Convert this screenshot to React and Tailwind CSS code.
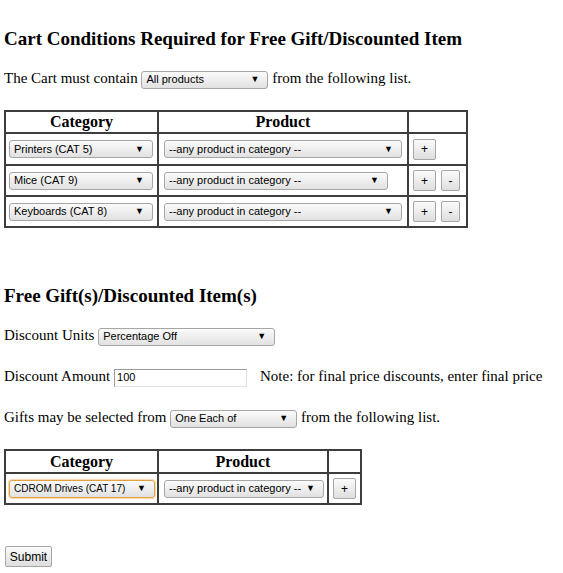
const sel =
  "inline-flex items-center justify-between h-[18px] rounded-[3px] border border-[#a6a6a6] bg-linear-to-b from-[#fbfbfb] to-[#e1e1e1] pl-[4px] pr-[8px] align-middle whitespace-nowrap font-['Liberation_Sans',Arial,sans-serif] text-[11px] leading-none text-black"

const btn =
  "flex h-[21px] items-center justify-center rounded-[2px] border border-[#a6a6a6] bg-linear-to-b from-[#fbfbfb] to-[#dedede] font-['Liberation_Sans',Arial,sans-serif] text-[12px] leading-none text-black"

const Select = ({ label, className = '', labelClass = '' }) => (
  <span className={`${sel} ${className}`}>
    <span className={labelClass}>{label}</span>
    <span className="text-[9px]">▼</span>
  </span>
)

const conditions = [
  { category: 'Printers (CAT 5)', productWidth: 'w-[238px]', minus: false, height: 'h-[30px]' },
  { category: 'Mice (CAT 9)', productWidth: 'w-[224px]', minus: true, height: 'h-[29px]' },
  { category: 'Keyboards (CAT 8)', productWidth: 'w-[238px]', minus: true, height: 'h-[29px]' },
]

export default function App() {
  return (
    <div className="min-h-[573px] bg-white pl-[4px] font-['Liberation_Serif','Times_New_Roman',serif] text-[15px] text-black">
      <h3 className="pt-[28px] text-[19px] font-bold leading-[22px]">
        Cart Conditions Required for Free Gift/Discounted Item
      </h3>
      <div className="mt-[19px] h-[19px] leading-[19px]">
        The Cart must contain <Select label="All products" className="w-[127px]" /> from the following list.
      </div>

      <div className="mt-[22px] grid w-fit grid-cols-[151px_248px_57px] gap-[2px] bg-[#3d3d3d] p-[2px]">
        <div className="flex h-[20px] items-center justify-center bg-white text-[16px] font-bold">Category</div>
        <div className="flex h-[20px] items-center justify-center bg-white text-[16px] font-bold">Product</div>
        <div className="h-[20px] bg-white" />
        {conditions.map((row) => (
          <div key={row.category} className="contents">
            <div className={`flex ${row.height} items-center bg-white pl-[3px]`}>
              <Select label={row.category} className="w-[144px]" />
            </div>
            <div className={`flex ${row.height} items-center bg-white pl-[5px]`}>
              <Select label="--any product in category --" className={row.productWidth} />
            </div>
            <div className={`flex ${row.height} items-center gap-[5px] bg-white pl-[4px]`}>
              <button className={`${btn} w-[23px]`}>+</button>
              {row.minus && <button className={`${btn} w-[19px]`}>-</button>}
            </div>
          </div>
        ))}
      </div>

      <h3 className="mt-[57px] text-[19px] font-bold leading-[22px]">Free Gift(s)/Discounted Item(s)</h3>
      <div className="mt-[19px] h-[19px] leading-[19px]">
        Discount Units <Select label="Percentage Off" className="w-[177px]" />
      </div>
      <div className="mt-[22px] h-[19px] leading-[19px]">
        Discount Amount{' '}
        <input
          defaultValue="100"
          className="h-[18px] w-[133px] border border-t-[#9a9a9a] border-l-[#9a9a9a] border-r-[#e2e2e2] border-b-[#e2e2e2] px-[2px] align-middle font-['Liberation_Sans',Arial,sans-serif] text-[11px] outline-none"
        />
        <span className="ml-[13px]">Note: for final price discounts, enter final price</span>
      </div>
      <div className="mt-[22px] h-[19px] leading-[19px]">
        Gifts may be selected from <Select label="One Each of" className="w-[127px]" /> from the following list.
      </div>

      <div className="mt-[22px] grid w-fit grid-cols-[151px_168px_31px] gap-[2px] bg-[#3d3d3d] p-[2px]">
        <div className="flex h-[21px] items-center justify-center bg-white text-[16px] font-bold">Category</div>
        <div className="flex h-[21px] items-center justify-center bg-white text-[16px] font-bold">Product</div>
        <div className="h-[21px] bg-white" />
        <div className="flex h-[29px] items-center bg-white pl-[3px]">
          <Select
            label="CDROM Drives (CAT 17)"
            labelClass="text-[10px]"
            className="w-[146px] border-[#e3a23f] shadow-[0_0_1px_1px_rgba(240,190,110,0.6)]"
          />
        </div>
        <div className="flex h-[29px] items-center bg-white pl-[5px]">
          <Select label="--any product in category --" className="w-[160px]" />
        </div>
        <div className="flex h-[29px] items-center bg-white pl-[4px]">
          <button className={`${btn} w-[23px]`}>+</button>
        </div>
      </div>

      <button className={`${btn} mt-[41px] ml-[1px] h-[19px] w-[47px] text-[11px]`}>Submit</button>
    </div>
  )
}
